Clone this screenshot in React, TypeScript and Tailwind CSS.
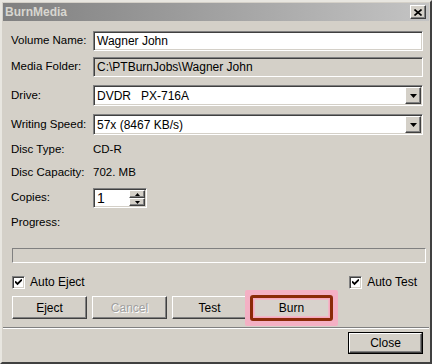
import React from "react";

const sunken =
  "border border-t-[#808080] border-l-[#808080] border-b-white border-r-white shadow-[inset_1px_1px_0_#404040,inset_-1px_-1px_0_#d4d0c8]";
const raised =
  "border border-t-white border-l-white border-b-[#404040] border-r-[#404040] shadow-[inset_-1px_-1px_0_#808080]";

function Arrow() {
  return (
    <div className={`w-[16px] h-full bg-[#d4d0c8] flex items-center justify-center ${raised}`}>
      <svg width="7" height="4" viewBox="0 0 7 4">
        <path d="M0 0h7L3.5 4z" fill="#000" />
      </svg>
    </div>
  );
}

function Label({ children }: { children: React.ReactNode }) {
  return <div className="w-[90px] shrink-0 pl-[8px] whitespace-nowrap">{children}</div>;
}

function Check({ label }: { label: string }) {
  return (
    <div className="flex items-center gap-[5px]">
      <div className={`w-[13px] h-[13px] bg-white flex items-center justify-center ${sunken}`}>
        <svg width="7" height="7" viewBox="0 0 7 7">
          <path d="M0 2.5l2.5 2.5L7 0.5" stroke="#000" strokeWidth="1.8" fill="none" />
        </svg>
      </div>
      <span className="text-[12px]">{label}</span>
    </div>
  );
}

function Btn({ children, disabled }: { children: React.ReactNode; disabled?: boolean }) {
  return (
    <div
      className={`w-[75px] h-[23px] flex items-center justify-center bg-[#d4d0c8] text-[12px] ${raised} ${
        disabled ? "text-[#a0a0a0] [text-shadow:1px_1px_0_#fff]" : ""
      }`}
    >
      {children}
    </div>
  );
}

export default function App() {
  return (
    <div
      className="w-[432px] h-[364px] bg-[#d4d0c8] text-[11.5px] text-black border-2 border-t-[#e8e6e0] border-l-[#e8e6e0] border-b-[#404040] border-r-[#404040] p-px flex flex-col"
      style={{ fontFamily: '"Liberation Sans", Arial, sans-serif' }}
    >
      {/* title bar */}
      <div className="h-[18px] bg-gradient-to-r from-[#808080] to-[#c4c4c4] flex items-center justify-between pl-[2px] pr-[3px]">
        <span className="font-bold text-[12px] text-[#d8d6d0]">BurnMedia</span>
        <div className={`w-[16px] h-[14px] bg-[#d4d0c8] flex items-center justify-center ${raised}`}>
          <svg width="8" height="7" viewBox="0 0 8 7">
            <path d="M0.5 0.5l7 6M7.5 0.5l-7 6" stroke="#000" strokeWidth="1.6" />
          </svg>
        </div>
      </div>

      <div className="flex flex-col pr-[6px]">
        <div className="flex items-center h-[20px] mt-[10px]">
          <Label>Volume Name:</Label>
          <div className={`flex-1 h-full bg-white flex items-center pl-[3px] text-[12px] ${sunken}`}>Wagner John</div>
        </div>
        <div className="flex items-center h-[20px] mt-[6px]">
          <Label>Media Folder:</Label>
          <div className={`flex-1 h-full bg-[#d4d0c8] flex items-center pl-[3px] text-[12px] ${sunken}`}>
            C:\PTBurnJobs\Wagner John
          </div>
        </div>
        <div className="flex items-center h-[21px] mt-[8px]">
          <Label>Drive:</Label>
          <div className={`flex-1 h-full bg-white flex items-center justify-between pl-[3px] p-[1px] text-[12px] ${sunken}`}>
            <span className="whitespace-pre">DVDR   PX-716A</span>
            <Arrow />
          </div>
        </div>
        <div className="flex items-center h-[21px] mt-[8px]">
          <Label>Writing Speed:</Label>
          <div className={`flex-1 h-full bg-white flex items-center justify-between pl-[3px] p-[1px] text-[12px] ${sunken}`}>
            <span>57x (8467 KB/s)</span>
            <Arrow />
          </div>
        </div>
        <div className="flex items-center h-[18px] mt-[6px]">
          <Label>Disc Type:</Label>
          <span>CD-R</span>
        </div>
        <div className="flex items-center h-[18px] mt-[5px]">
          <Label>Disc Capacity:</Label>
          <span>702. MB</span>
        </div>
        <div className="flex items-center h-[20px] mt-[6px]">
          <Label>Copies:</Label>
          <div className={`w-[54px] h-[20px] bg-white flex items-center justify-between pl-[3px] p-[1px] ${sunken}`}>
            <span className="text-[14px]">1</span>
            <div className="flex flex-col w-[16px] h-full">
              <div className={`flex-1 bg-[#d4d0c8] flex items-center justify-center ${raised}`}>
                <svg width="5" height="3" viewBox="0 0 5 3">
                  <path d="M0 3h5L2.5 0z" fill="#000" />
                </svg>
              </div>
              <div className={`flex-1 bg-[#d4d0c8] flex items-center justify-center ${raised}`}>
                <svg width="5" height="3" viewBox="0 0 5 3">
                  <path d="M0 0h5L2.5 3z" fill="#000" />
                </svg>
              </div>
            </div>
          </div>
        </div>
        <div className="flex items-center h-[18px] mt-[6px]">
          <Label>Progress:</Label>
        </div>
      </div>

      <div className="pl-[9px] pr-[3px] mt-[16px]">
        <div className="h-[15px] border border-t-[#808080] border-l-[#808080] border-b-white border-r-white" />
      </div>

      <div className="flex items-center justify-between pl-[9px] pr-[12px] mt-[11px] h-[16px]">
        <Check label="Auto Eject" />
        <Check label="Auto Test" />
      </div>

      <div className="flex items-center pl-[9px] mt-[6px] gap-[5px] h-[23px]">
        <Btn>Eject</Btn>
        <Btn disabled>Cancel</Btn>
        <Btn>Test</Btn>
        <div className="ml-[-7px] my-[-7px] p-[5px] bg-[#f4b0c4] rounded-[2px]">
          <div className="border-[3px] border-[#8b2a08] rounded-[3px] w-[83px] h-[26px] p-px bg-[#f6a8bc] flex">
            <div className="flex-1 flex items-center justify-center bg-[#d8d2cc] border border-[#f0b8c8] text-[12px]">Burn</div>
          </div>
        </div>
      </div>

      <div className="mt-[8px] h-[2px] border-t border-t-[#808080] border-b border-b-white" />

      <div className="flex justify-end pr-[6px] mt-[3px]">
        <div className="border border-black">
          <div className={`w-[73px] h-[20px] flex items-center justify-center bg-[#d4d0c8] text-[12px] ${raised}`}>Close</div>
        </div>
      </div>
    </div>
  );
}
